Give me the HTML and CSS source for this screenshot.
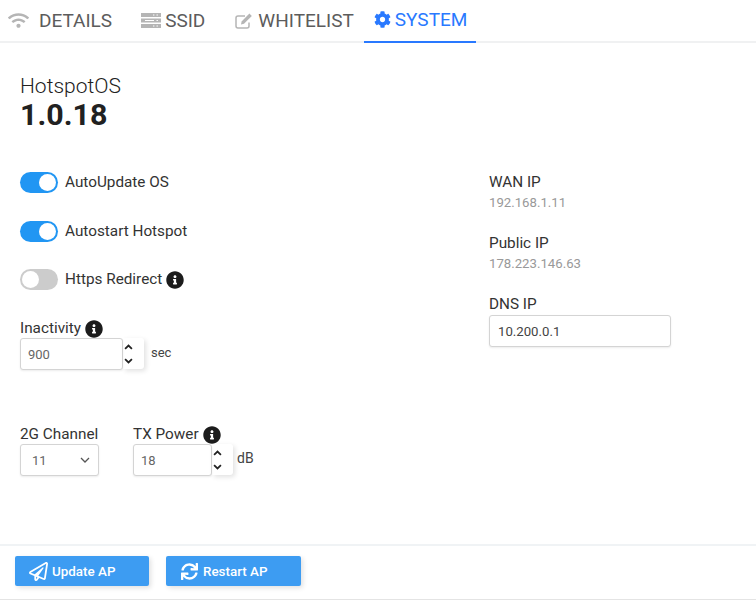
FILE: index.html
```html
<!DOCTYPE html>
<html lang="en">
<head>
<meta charset="utf-8">
<title>HotspotOS</title>
<link rel="stylesheet" href="styles.css">
</head>
<body>
<svg class="defs" aria-hidden="true">
  <symbol id="i-info" viewBox="0 0 512 512"><path d="M256 8C119.043 8 8 119.083 8 256c0 136.997 111.043 248 248 248s248-111.003 248-248C504 119.083 392.957 8 256 8zm0 110c23.196 0 42 18.804 42 42s-18.804 42-42 42-42-18.804-42-42 18.804-42 42-42zm56 254c0 6.627-5.373 12-12 12h-88c-6.627 0-12-5.373-12-12v-24c0-6.627 5.373-12 12-12h12v-64h-12c-6.627 0-12-5.373-12-12v-24c0-6.627 5.373-12 12-12h64c6.627 0 12 5.373 12 12v100h12c6.627 0 12 5.373 12 12v24z"/></symbol>
  <symbol id="i-up" viewBox="0 0 10 6"><path d="M1.2 5L5 1.4 8.8 5" fill="none" stroke="currentColor" stroke-width="2"/></symbol>
  <symbol id="i-down" viewBox="0 0 10 6"><path d="M1.2 1L5 4.6 8.8 1" fill="none" stroke="currentColor" stroke-width="2"/></symbol>
</svg>
<nav class="tabs">
  <a class="tab tab-details">
    <svg class="tab-icon icon-wifi" viewBox="0 0 640 512"><path d="M634.91 154.88C457.74-8.99 182.19-8.93 5.09 154.88c-6.66 6.16-6.79 16.59-.35 22.98l34.24 33.97c6.14 6.1 16.02 6.23 22.4.38 145.92-133.68 371.3-133.71 517.25 0 6.38 5.85 16.26 5.71 22.4-.38l34.24-33.97c6.43-6.39 6.3-16.82-.36-22.98zM320 352c-35.35 0-64 28.65-64 64s28.65 64 64 64 64-28.65 64-64-28.65-64-64-64zm202.67-83.59c-115.26-101.93-290.21-101.82-405.34 0-6.9 6.1-7.12 16.69-.57 23.15l34.44 33.99c6 5.92 15.66 6.32 22.05.8 83.95-72.57 209.74-72.41 293.49 0 6.39 5.52 16.05 5.13 22.05-.8l34.44-33.99c6.56-6.46 6.33-17.06-.56-23.15z"/></svg>
    DETAILS
  </a>
  <a class="tab tab-ssid">
    <svg class="tab-icon icon-server" viewBox="0 0 20 15"><path fill-rule="evenodd" d="M0 0h20v4H0zM12 1.4v1.2h1.4V1.4zM15.5 1.4v1.2h1.4V1.4zM0 5.5h20v4H0zM4 6.9v1.2h9V6.9zM15.5 6.9v1.2h1.4V6.9zM0 11h20v4H0zM12 12.4v1.2h1.4v-1.2zM15.5 12.4v1.2h1.4v-1.2z"/></svg>
    SSID
  </a>
  <a class="tab tab-whitelist">
    <svg class="tab-icon icon-edit" viewBox="0 0 18 16"><path d="M14 9.5V13a2 2 0 0 1-2 2H3a2 2 0 0 1-2-2V5a2 2 0 0 1 2-2h7" fill="none" stroke="currentColor" stroke-width="1.5"/><path d="M6.6 8.4L6 11.4l3-.6 7.8-7.8-2.4-2.4z"/></svg>
    WHITELIST
  </a>
  <a class="tab tab-active">
    <svg class="tab-icon icon-cog" viewBox="0 0 512 512"><path d="M487.4 315.7l-42.6-24.6c4.3-23.2 4.3-47 0-70.2l42.6-24.6c4.9-2.8 7.1-8.6 5.5-14-11.1-35.6-30-67.8-54.7-94.6-3.8-4.1-10-5.1-14.8-2.3L380.8 110c-17.9-15.4-38.5-27.3-60.8-35.1V25.8c0-5.6-3.9-10.5-9.4-11.7-36.7-8.2-74.3-7.8-109.2 0-5.5 1.2-9.4 6.1-9.4 11.7V75c-22.2 7.9-42.8 19.8-60.8 35.1L88.7 85.5c-4.9-2.8-11-1.9-14.8 2.3-24.7 26.7-43.6 58.9-54.7 94.6-1.7 5.4.6 11.2 5.5 14L67.3 221c-4.3 23.2-4.3 47 0 70.2l-42.6 24.6c-4.9 2.8-7.1 8.6-5.5 14 11.1 35.6 30 67.8 54.7 94.6 3.8 4.1 10 5.1 14.8 2.3l42.6-24.6c17.9 15.4 38.5 27.3 60.8 35.1v49.2c0 5.6 3.9 10.5 9.4 11.7 36.7 8.2 74.3 7.8 109.2 0 5.5-1.2 9.4-6.1 9.4-11.7v-49.2c22.2-7.9 42.8-19.8 60.8-35.1l42.6 24.6c4.9 2.8 11 1.9 14.8-2.3 24.7-26.7 43.6-58.9 54.7-94.6 1.5-5.5-.7-11.3-5.6-14.1zM256 336c-44.1 0-80-35.9-80-80s35.9-80 80-80 80 35.9 80 80-35.9 80-80 80z"/></svg>
    SYSTEM
  </a>
</nav>

<main class="content">
  <header class="version">
    <div class="version-name">HotspotOS</div>
    <div class="version-number">1.0.18</div>
  </header>
  <div class="columns">
    <section class="col-left">
      <div class="toggle-row"><span class="switch on"><span class="knob"></span></span><span class="label">AutoUpdate OS</span></div>
      <div class="toggle-row"><span class="switch on"><span class="knob"></span></span><span class="label">Autostart Hotspot</span></div>
      <div class="toggle-row"><span class="switch"><span class="knob"></span></span><span class="label">Https Redirect</span><svg class="info"><use href="#i-info"/></svg></div>

      <div class="field field-inactivity">
        <div class="label label-line">Inactivity <svg class="info"><use href="#i-info"/></svg></div>
        <div class="number-row">
          <div class="box box-wide">900</div>
          <div class="spinner"><svg class="chev"><use href="#i-up"/></svg><svg class="chev"><use href="#i-down"/></svg></div>
          <span class="unit unit-sec">sec</span>
        </div>
      </div>

      <div class="radio-row">
        <div class="field">
          <div class="label label-line">2G Channel</div>
          <div class="box box-select"><span>11</span><svg class="select-chev" viewBox="0 0 10 6"><path d="M1 1l4 4 4-4" fill="none" stroke="currentColor" stroke-width="1.3"/></svg></div>
        </div>
        <div class="field">
          <div class="label label-line">TX Power <svg class="info"><use href="#i-info"/></svg></div>
          <div class="number-row">
            <div class="box box-narrow">18</div>
            <div class="spinner"><svg class="chev"><use href="#i-up"/></svg><svg class="chev"><use href="#i-down"/></svg></div>
            <span class="unit unit-db">dB</span>
          </div>
        </div>
      </div>
    </section>
    <section class="col-right">
      <div class="ip-item"><div class="label">WAN IP</div><div class="ip-value">192.168.1.11</div></div>
      <div class="ip-item"><div class="label">Public IP</div><div class="ip-value">178.223.146.63</div></div>
      <div class="ip-item"><div class="label">DNS IP</div><div class="box box-dns">10.200.0.1</div></div>
    </section>
  </div>
</main>

<footer class="actions">
  <button class="btn btn-update">
    <svg class="btn-icon icon-plane" viewBox="0 0 512 512"><path d="M440 6.5L24 246.4c-34.4 19.9-31.1 70.8 5.7 85.9L144 379.6V464c0 46.4 59.2 65.5 86.6 28.6l43.8-59.1 111.9 46.2c5.9 2.4 12.1 3.6 18.3 3.6 8.2 0 16.3-2.1 23.6-6.2 12.8-7.2 21.6-20 23.9-34.5l59.4-387.2c6.1-40.1-36.9-68.8-71.5-48.9zM192 464v-64.6l36.6 15.1L192 464zm212.6-28.7l-153.8-63.5L391 169.5c10.7-15.5-9.5-33.5-23.7-21.2L155.8 332.6 48 288 464 48l-59.4 387.3z"/></svg>
    Update AP
  </button>
  <button class="btn btn-restart">
    <svg class="btn-icon" viewBox="0 0 512 512"><path d="M440.65 12.57l4 82.77A247.16 247.16 0 0 0 255.83 8C134.73 8 33.91 94.92 12.29 209.82A12 12 0 0 0 24.09 224h49.05a12 12 0 0 0 11.67-9.26 175.91 175.91 0 0 1 317-56.94l-101.46-4.86a12 12 0 0 0-12.57 12v47.41a12 12 0 0 0 12 12H500a12 12 0 0 0 12-12V12a12 12 0 0 0-12-12h-47.37a12 12 0 0 0-11.98 12.57zM255.83 432a175.61 175.61 0 0 1-146-77.8l101.8 4.87a12 12 0 0 0 12.57-12v-47.4a12 12 0 0 0-12-12H12a12 12 0 0 0-12 12V500a12 12 0 0 0 12 12h47.35a12 12 0 0 0 12-12.6l-4.15-82.57A247.17 247.17 0 0 0 255.83 504c121.11 0 221.93-86.92 243.55-201.82a12 12 0 0 0-11.8-14.18h-49.05a12 12 0 0 0-11.67 9.26A175.86 175.86 0 0 1 255.83 432z"/></svg>
    Restart AP
  </button>
</footer>
</body>
</html>
```
FILE: styles.css
```css
* { box-sizing: border-box; }
html, body { margin: 0; height: 600px; overflow: hidden; }
body {
  display: flex;
  flex-direction: column;
  background: #fff;
  color: #212121;
  font-family: Roboto, "Liberation Sans", sans-serif;
  font-size: 15.3px;
}
.defs { display: none; }

.tabs {
  display: flex;
  height: 43px;
  padding-left: 8px;
  border-bottom: 2px solid #f0f1f2;
  flex: none;
}
.tab {
  display: flex;
  align-items: center;
  height: 43px;
  padding-bottom: 2px;
  font-size: 19px;
  color: #5c5c5c;
  gap: 10px;
}
.tab-icon { fill: #b5b5b5; color: #b5b5b5; flex: none; }
.icon-wifi { width: 21px; height: 17px; }
.icon-server { width: 20px; height: 15px; }
.icon-edit { width: 18px; height: 16px; }
.icon-cog { width: 17px; height: 17px; fill: #2979ff; }
.tab-details { margin-right: 29px; }
.tab-ssid { gap: 4px; margin-right: 30px; }
.tab-whitelist { gap: 5px; margin-right: 10px; }
.tab-active {
  color: #2979ff;
  padding: 0 9px 2px 10px;
  gap: 4px;
  border-bottom: 2px solid #2979ff;
}

.content {
  flex: 1;
  padding: 30px 20px 0;
}
.version-name { font-size: 21px; font-weight: 300; line-height: 26px; }
.version-number { font-size: 30.4px; font-weight: 700; line-height: 32px; }

.columns {
  display: flex;
  margin-top: 41px;
}
.col-left { width: 469px; flex: none; }
.col-right { flex: 1; padding-top: 1px; }

.toggle-row {
  display: flex;
  align-items: center;
  height: 21px;
  margin-bottom: 27.5px;
}
.switch {
  display: block;
  position: relative;
  width: 38px;
  height: 21px;
  border-radius: 11px;
  background: #ccc;
  margin-right: 7px;
  flex: none;
}
.switch.on { background: #2196f3; }
.knob {
  position: absolute;
  top: 2px;
  left: 2px;
  width: 17px;
  height: 17px;
  border-radius: 50%;
  background: #fff;
}
.switch.on .knob { left: 19px; }
.label { color: #333; line-height: 19px; }
.label-line { display: flex; align-items: center; gap: 4px; }
.info { width: 18px; height: 18px; fill: #1c1c1c; margin-left: 4px; flex: none; }
.label-line .info { margin-left: 0; }

.field-inactivity { padding-top: 1.5px; }
.number-row { display: flex; align-items: flex-start; }
.box {
  display: flex;
  align-items: center;
  height: 32px;
  padding-left: 7px;
  border: 1px solid #d4d4d4;
  border-radius: 3px;
  background: #fff;
  font-size: 13px;
  color: #666;
  box-shadow: 0 1px 2px rgba(0, 0, 0, .08);
}
.box-wide { width: 103px; }
.box-narrow { width: 79px; }
.box-select { width: 79px; justify-content: space-between; padding: 0 8px 0 11px; }
.select-chev { width: 10px; height: 6px; color: #555; }
.box-dns { width: 182px; padding-left: 8px; color: #444; font-size: 13.2px; }
.spinner {
  display: flex;
  flex-direction: column;
  align-items: flex-start;
  justify-content: center;
  gap: 8px;
  width: 21px;
  height: 31px;
  padding-left: 1px;
  border-radius: 0 3px 3px 0;
  box-shadow: 2px 2px 5px rgba(0, 0, 0, .12);
}
.chev { width: 9px; height: 6px; color: #222; }
.unit { font-size: 13px; color: #444; margin-left: 7px; margin-top: 7px; }
.unit-db { font-size: 14px; margin-left: 4px; margin-top: 6px; }

.radio-row {
  display: flex;
  gap: 34px;
  margin-top: 55px;
}
.ip-item { margin-bottom: 21px; }
.ip-item .label { margin-bottom: 1px; }
.ip-value { font-size: 13.2px; color: #999; line-height: 20px; }

.actions {
  display: flex;
  flex: none;
  gap: 17px;
  height: 56px;
  padding: 10px 15px 0;
  border-top: 2px solid #f0f3f5;
  border-bottom: 1px solid #e4e4e4;
}
.btn {
  display: flex;
  align-items: center;
  gap: 5px;
  height: 30px;
  border: 0;
  border-radius: 2px;
  background: #3d9cf2;
  color: #fff;
  font-family: inherit;
  font-size: 13.4px;
  font-weight: 500;
  padding: 0 0 0 15px;
  box-shadow: 2px 2px 5px rgba(0, 0, 0, .12);
}
.btn-update { width: 134px; padding-left: 14px; gap: 4px; }
.btn-restart { width: 135px; }
.btn-icon { width: 17px; height: 17px; fill: #fff; }
.icon-plane { width: 19px; height: 19px; }
```
